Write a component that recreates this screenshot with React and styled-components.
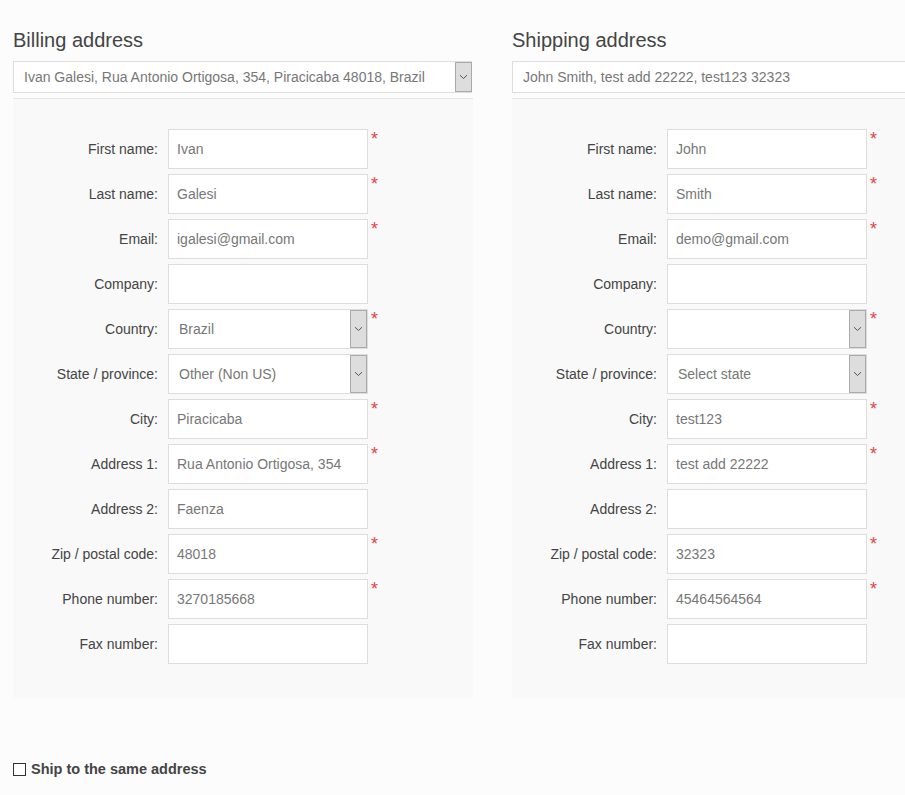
import React from 'react';
import styled, { createGlobalStyle } from 'styled-components';

const GlobalStyle = createGlobalStyle`
  body {
    margin: 0;
    background: #fcfcfc;
    font-family: "Liberation Sans", Arial, sans-serif;
    overflow-x: hidden;
  }
`;

const Page = styled.div`
  padding: 28px 0 0 13px;
  width: 1000px;
`;

const Columns = styled.div`
  display: flex;
  gap: 39px;
`;

const Column = styled.div`
  width: 460px;
  flex: none;
`;

const Title = styled.h2`
  margin: 0;
  font-size: 20px;
  font-weight: normal;
  line-height: 24px;
  color: #444;
`;

const AddressSelect = styled.div`
  margin-top: 9px;
  width: 459px;
  height: 32px;
  box-sizing: border-box;
  border: 1px solid #ddd;
  background: #fff;
  display: flex;
  align-items: center;
  justify-content: space-between;
  font-size: 14px;
  color: #777;
  padding-left: 10px;
`;

const Arrow = styled.span`
  align-self: stretch;
  width: 17px;
  flex: none;
  box-sizing: border-box;
  background: #ddd;
  border: 1px solid #aaa;
  display: flex;
  align-items: center;
  justify-content: center;
  margin: 0 -1px 0 0;
`;

const Panel = styled.div`
  margin-top: 5px;
  border-top: 1px solid #e6e6e6;
  background: #f9f9f9;
  padding: 30px 0 34px;
  display: flex;
  flex-direction: column;
  gap: 5px;
`;

const Row = styled.div`
  display: grid;
  grid-template-columns: 145px 200px auto;
  column-gap: 10px;
  align-items: center;
`;

const Label = styled.label`
  text-align: right;
  font-size: 14px;
  color: #444;
`;

const Field = styled.div`
  height: 40px;
  box-sizing: border-box;
  border: 1px solid #ddd;
  background: #fff;
  display: flex;
  align-items: center;
  justify-content: space-between;
  padding-left: ${p => (p.$select ? '10px' : '8px')};
  font-size: 14px;
  color: ${p => (p.$placeholder ? '#888' : '#777')};
`;

const FieldArrow = styled(Arrow)`
  margin: 0;
`;

const Required = styled.span`
  align-self: start;
  margin: 2px 0 0 -7px;
  color: #e4434b;
  font-size: 18px;
  line-height: 16px;
`;

const CheckRow = styled.label`
  display: flex;
  align-items: center;
  gap: 5px;
  margin-top: 63px;
  font-size: 14.5px;
  font-weight: bold;
  color: #444;
`;

const Box = styled.span`
  width: 13px;
  height: 13px;
  box-sizing: border-box;
  border: 1px solid #333;
  background: #fff;
`;

const Chevron = () => (
  <svg width="9" height="6" viewBox="0 0 9 6">
    <path d="M1 1.2 L4.5 4.5 L8 1.2" fill="none" stroke="#555" strokeWidth="1" />
  </svg>
);

const billing = [
  ['First name:', 'Ivan', true],
  ['Last name:', 'Galesi', true],
  ['Email:', 'igalesi@gmail.com', true],
  ['Company:', '', false],
  ['Country:', 'Brazil', true, 'select'],
  ['State / province:', 'Other (Non US)', false, 'select'],
  ['City:', 'Piracicaba', true],
  ['Address 1:', 'Rua Antonio Ortigosa, 354', true],
  ['Address 2:', 'Faenza', false],
  ['Zip / postal code:', '48018', true],
  ['Phone number:', '3270185668', true],
  ['Fax number:', '', false],
];

const shipping = [
  ['First name:', 'John', true],
  ['Last name:', 'Smith', true],
  ['Email:', 'demo@gmail.com', true],
  ['Company:', '', false],
  ['Country:', '', true, 'select'],
  ['State / province:', 'Select state', false, 'select'],
  ['City:', 'test123', true],
  ['Address 1:', 'test add 22222', true],
  ['Address 2:', '', false],
  ['Zip / postal code:', '32323', true],
  ['Phone number:', '45464564564', true],
  ['Fax number:', '', false],
];

const AddressBlock = ({ title, summary, rows }) => (
  <Column>
    <Title>{title}</Title>
    <AddressSelect>
      <span>{summary}</span>
      <Arrow><Chevron /></Arrow>
    </AddressSelect>
    <Panel>
      {rows.map(([label, value, req, kind]) => (
        <Row key={label}>
          <Label>{label}</Label>
          <Field $select={kind === 'select'}>
            <span>{value}</span>
            {kind === 'select' && <FieldArrow><Chevron /></FieldArrow>}
          </Field>
          {req ? <Required>*</Required> : <span />}
        </Row>
      ))}
    </Panel>
  </Column>
);

export default function App() {
  return (
    <>
      <GlobalStyle />
      <Page>
        <Columns>
          <AddressBlock
            title="Billing address"
            summary="Ivan Galesi, Rua Antonio Ortigosa, 354, Piracicaba 48018, Brazil"
            rows={billing}
          />
          <AddressBlock
            title="Shipping address"
            summary="John Smith, test add 22222, test123 32323"
            rows={shipping}
          />
        </Columns>
        <CheckRow>
          <Box />
          Ship to the same address
        </CheckRow>
      </Page>
    </>
  );
}
